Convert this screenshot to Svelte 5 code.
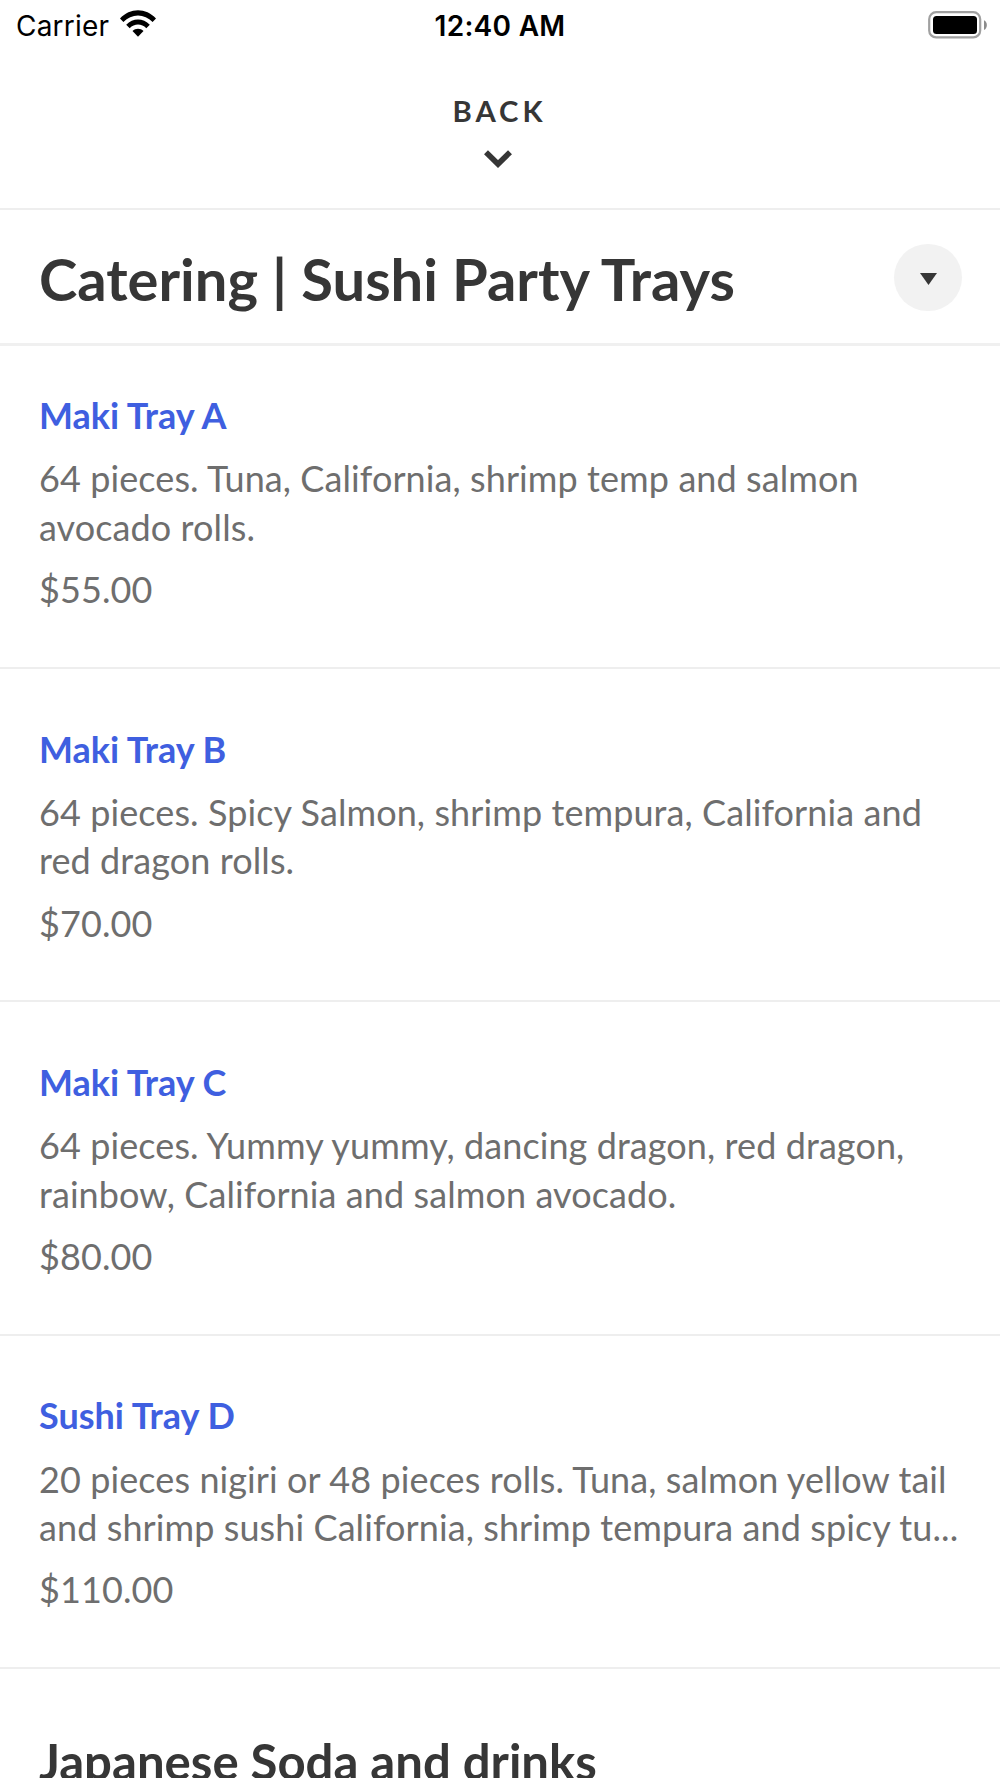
<script lang="ts">
	interface MenuItem {
		name: string;
		description: string;
		price: string;
	}

	const items: MenuItem[] = [
		{
			name: 'Maki Tray A',
			description: '64 pieces. Tuna, California, shrimp temp and salmon avocado rolls.',
			price: '$55.00'
		},
		{
			name: 'Maki Tray B',
			description: '64 pieces. Spicy Salmon, shrimp tempura, California and red dragon rolls.',
			price: '$70.00'
		},
		{
			name: 'Maki Tray C',
			description: '64 pieces. Yummy yummy, dancing dragon, red dragon, rainbow, California and salmon avocado.',
			price: '$80.00'
		},
		{
			name: 'Sushi Tray D',
			description: '20 pieces nigiri or 48 pieces rolls. Tuna, salmon yellow tail and shrimp sushi California, shrimp tempura and spicy tu...',
			price: '$110.00'
		}
	];
</script>

<div class="screen">
	<div class="status">
		<div class="carrier">
			<span>Carrier</span>
			<svg class="wifi" viewBox="0 0 36 27" width="36" height="27">
				<path d="M0 8.5C10 -2.5 26 -2.5 36 8.5L32.6 12C24.5 3.3 11.5 3.3 3.4 12Z" />
				<path d="M6.2 14.7C12.8 7.6 23.2 7.6 29.8 14.7L26.3 18.2C21.7 13.3 14.3 13.3 9.7 18.2Z" />
				<path d="M12.5 21C15.6 18 20.4 18 23.5 21L18 26.7Z" />
			</svg>
		</div>
		<span class="time">12:40 AM</span>
		<div class="power">
			<svg viewBox="0 0 60 28" width="60" height="28">
				<rect x="1.2" y="1.2" width="51" height="25.2" rx="7" fill="none" stroke="#a0a0a0" stroke-width="2.2" />
				<rect x="5" y="5" width="44" height="18" rx="3.5" />
				<path d="M56 9.2C59.8 11 59.8 17 56 19Z" fill="#8c8c8c" />
			</svg>
		</div>
	</div>

	<button class="back">
		<span>BACK</span>
		<svg viewBox="0 0 28 18" width="28" height="18">
			<path d="M2 2.2L14 14L26 2.2" fill="none" stroke="#363636" stroke-width="5.6" />
		</svg>
	</button>

	<header>
		<h1>Catering | Sushi Party Trays</h1>
		<button class="toggle" aria-label="Choose section">
			<svg viewBox="0 0 17 12" width="17" height="12">
				<path d="M0 0H17L8.5 12Z" fill="#363636" />
			</svg>
		</button>
	</header>

	<ul>
		{#each items as item}
			<li>
				<h3>{item.name}</h3>
				<p class="description">{item.description}</p>
				<p class="price">{item.price}</p>
			</li>
		{/each}
	</ul>

	<h2>Japanese Soda and drinks</h2>
</div>

<style>
	:global(body) { background: #fff; overflow: hidden; }
	.screen { box-sizing: border-box; width: 1000px; height: 1778px; overflow: hidden; font-family: Lato, sans-serif; color: #363636; background: #fff; }
	h1, h2, h3, p, ul { margin: 0; padding: 0; }
	button { border: 0; padding: 0; color: inherit; font-family: inherit; }
	svg { display: block; }

	.status { display: grid; grid-template-columns: 1fr auto 1fr; height: 50px; padding: 0 12px 0 16px; font-family: Inter, sans-serif; font-size: 28px; color: #000; }
	.carrier { display: flex; gap: 11px; line-height: 52px; letter-spacing: 0.2px; }
	.wifi { margin-top: 10px; }
	.time { margin: 0 2px 0 -2px; font-weight: 600; line-height: 52px; letter-spacing: 0.3px; }
	.power { display: flex; justify-content: flex-end; padding-top: 10.5px; }

	.back { display: flex; flex-direction: column; align-items: center; gap: 21px; box-sizing: border-box; width: 100%; height: 160px; padding: 43px 4px 0 0; border-bottom: 2px solid #eee; background: none; }
	.back span { padding-left: 3px; font-size: 29.3px; font-weight: 700; line-height: 36px; letter-spacing: 4px; }

	header { display: flex; align-items: center; justify-content: space-between; box-sizing: border-box; height: 135.5px; padding: 2.6px 38.5px 0 39px; border-bottom: 3px solid #f0f0f0; }
	h1 { padding-top: 2px; font-size: 57.9px; font-weight: 700; line-height: 70px; }
	.toggle { display: flex; align-items: center; justify-content: center; box-sizing: border-box; width: 67.5px; height: 67.5px; padding: 2px 0 0 2px; border-radius: 50%; background: #f2f2f2; }

	ul { list-style: none; }
	li { box-sizing: border-box; height: 333.33px; padding: 57.8px 39px 0; border-bottom: 2px solid #eee; }
	li:first-child { height: 323.5px; padding-top: 47.4px; }
	h3 { font-size: 36px; font-weight: 700; line-height: 44px; color: #3f5fe0; }
	.description { margin-top: 17.2px; font-size: 36px; line-height: 48.5px; letter-spacing: 0.09px; color: #6e6e6e; }
	.price { margin-top: 13.7px; font-size: 36px; line-height: 48px; letter-spacing: 0.1px; color: #6e6e6e; }

	h2 { padding: 62px 39px 0; font-size: 49.1px; font-weight: 700; line-height: 60px; }
</style>
